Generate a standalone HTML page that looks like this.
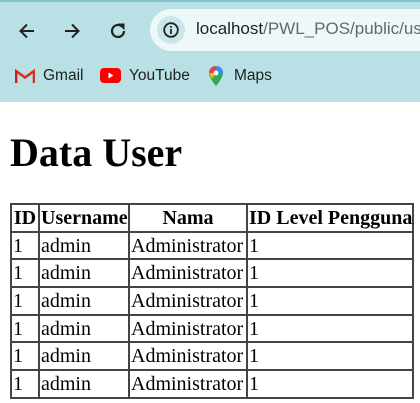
<!DOCTYPE html>
<html><head><meta charset="utf-8"><style>
*{box-sizing:border-box}
body{margin:0;width:420px;height:403px;overflow:hidden;background:#fff;font-family:"Liberation Serif",serif}
.chrome{position:absolute;left:0;top:0;width:420px;height:102px;background:#b9e1e5}
.topline{position:absolute;left:0;top:0;width:420px;height:2px;background:#7fc6cc}
.addr{position:absolute;left:150px;top:9px;width:300px;height:42px;border-radius:21px;background:#eef8f9}
.info{position:absolute;left:157px;top:16px;width:28px;height:28px;border-radius:14px;background:#c9e6ea}
.url{position:absolute;left:196px;top:19px;font:17px "Liberation Sans",sans-serif;color:#1f1f1f;white-space:nowrap}
.url span{color:#5f6b6e}
.bm{position:absolute;top:67px;font:15.5px "Liberation Sans",sans-serif;color:#1f1f1f}
h1{position:absolute;left:10px;top:131px;margin:0;font-size:40px;font-weight:bold;line-height:44px}
table{position:absolute;left:10px;top:203px;border-collapse:separate;border-spacing:0;border:1px solid #444;font-size:20px}
td,th{border:1px solid #444;padding:0 1px;height:27.7px;line-height:22px;white-space:nowrap}
th{font-weight:bold;text-align:center}
td{text-align:left}
</style></head><body>
<div class="chrome">
<div class="topline"></div>
<svg style="position:absolute;left:16px;top:20px" width="22" height="22" viewBox="0 0 22 22"><path d="M18 11H5M11 4.5L4.5 11L11 17.5" stroke="#222" stroke-width="2" fill="none"/></svg>
<svg style="position:absolute;left:61px;top:20px" width="22" height="22" viewBox="0 0 22 22"><path d="M4 11H17M11 4.5L17.5 11L11 17.5" stroke="#222" stroke-width="2" fill="none"/></svg>
<svg style="position:absolute;left:107px;top:20px" width="22" height="22" viewBox="0 0 22 22"><path d="M17 11A6 6 0 1 1 15 6.5" stroke="#222" stroke-width="2.2" fill="none"/><path d="M12 4H17V9Z" fill="#222" stroke="#222" stroke-width="1"/></svg>
<div class="addr"></div>
<div class="info"></div>
<svg style="position:absolute;left:163px;top:22px" width="16" height="16" viewBox="0 0 16 16"><circle cx="8" cy="8" r="6.8" stroke="#222" stroke-width="1.8" fill="none"/><rect x="7.1" y="7" width="1.8" height="5" fill="#222"/><rect x="7.1" y="4" width="1.8" height="1.8" fill="#222"/></svg>
<div class="url">localhost<span>/PWL_POS/public/user</span></div>
<svg style="position:absolute;left:15px;top:69px" width="20" height="15" viewBox="0 0 20 15"><path d="M1 14V2L10 8.5L19 2V14" stroke="#d93025" stroke-width="2.6" fill="none"/><path d="M1 14V2" stroke="#c5221f" stroke-width="2.6"/></svg>
<div class="bm" style="left:43px">Gmail</div>
<svg style="position:absolute;left:100px;top:68px" width="21" height="16" viewBox="0 0 21 16"><rect x="0" y="0" width="21" height="15" rx="4" fill="#ff0000"/><path d="M8.5 4.5L13.5 7.5L8.5 10.5Z" fill="#fff"/></svg>
<div class="bm" style="left:129px">YouTube</div>
<svg style="position:absolute;left:208px;top:65px" width="16" height="22" viewBox="0 0 16 22"><path d="M8 21C8 21 1 13 1 8A7 7 0 0 1 15 8C15 13 8 21 8 21Z" fill="#34a853"/><path d="M1 8A7 7 0 0 1 8 1L8 8Z" fill="#ea4335"/><path d="M8 1A7 7 0 0 1 15 8L8 8Z" fill="#4285f4"/><path d="M1 8L8 8L4 14Z" fill="#fbbc04"/><circle cx="8" cy="8" r="2.5" fill="#fff"/></svg>
<div class="bm" style="left:234px">Maps</div>
</div>
<h1>Data User</h1>
<table style="width:404px;table-layout:fixed">
<tr><th style="width:28px">ID</th><th style="width:90px">Username</th><th style="width:118px">Nama</th><th>ID Level Pengguna</th></tr>
<tr><td>1</td><td>admin</td><td>Administrator</td><td>1</td></tr>
<tr><td>1</td><td>admin</td><td>Administrator</td><td>1</td></tr>
<tr><td>1</td><td>admin</td><td>Administrator</td><td>1</td></tr>
<tr><td>1</td><td>admin</td><td>Administrator</td><td>1</td></tr>
<tr><td>1</td><td>admin</td><td>Administrator</td><td>1</td></tr>
<tr><td>1</td><td>admin</td><td>Administrator</td><td>1</td></tr>
</table>
</body></html>
